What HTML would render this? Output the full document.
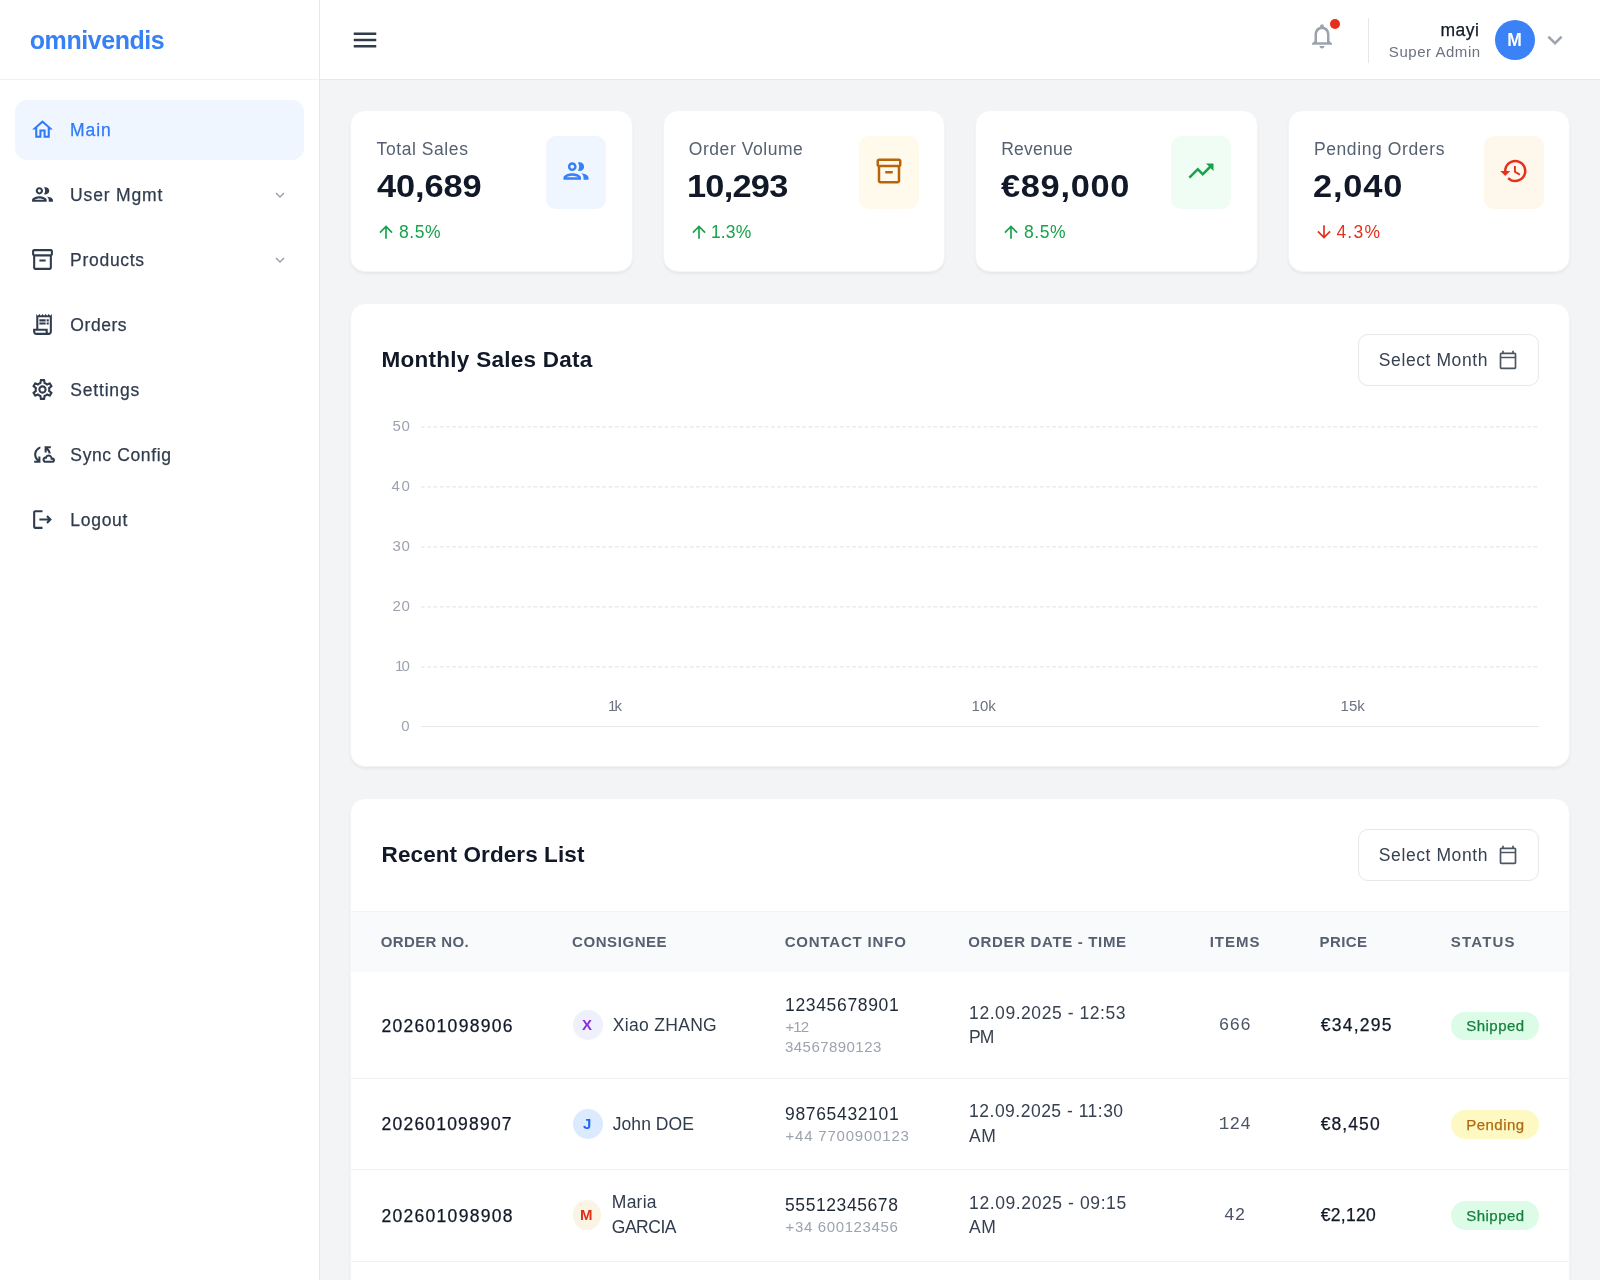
<!DOCTYPE html>
<html><head><meta charset="utf-8"><title>omnivendis</title>
<style>
html,body{margin:0;padding:0;}
body{width:1600px;height:1280px;overflow:hidden;background:#f3f4f6;position:relative;font-family:"Liberation Sans",sans-serif;}
.t{position:absolute;white-space:nowrap;}
.i{position:absolute;display:block;}
.b{position:absolute;}
#w{position:absolute;left:0;top:0;width:1600px;height:1280px;will-change:transform;}
</style></head><body>
<div id="w">
<div class="b" style="left:0px;top:0px;width:319px;height:1280px;background:#fff;border-right:1px solid #e5e7eb;"></div>
<div class="b" style="left:0px;top:79px;width:319px;height:1px;background:#f1f2f4;"></div>
<div class="t" style="left:29.80px;top:28px;font-size:25px;line-height:25px;color:#3780f6;letter-spacing:-0.449px;font-weight:700;">omnivendis</div>
<div class="b" style="left:15px;top:100px;width:289px;height:60px;background:#eff6ff;border-radius:12px;"></div>
<svg class="i" style="left:30px;top:116.9px;" width="25" height="25" viewBox="0 0 24 24" fill="#2f7af6"><path d="M12 5.69l5 4.5V18h-2v-6H9v6H7v-7.81l5-4.5M12 3L2 12h3v8h6v-6h2v6h6v-8h3L12 3z"/></svg>
<div class="t" style="left:70.10px;top:122px;font-size:17.5px;line-height:17.5px;color:#2f7af6;letter-spacing:0.923px;-webkit-text-stroke:0.25px #2f7af6;">Main</div>
<svg class="i" style="left:30px;top:181.9px;" width="25" height="25" viewBox="0 0 24 24" fill="#303c4d"><path d="M9 13.75c-2.34 0-7 1.17-7 3.5V19h14v-1.75c0-2.33-4.66-3.5-7-3.5zM4.34 17c.84-.58 2.87-1.25 4.66-1.25s3.82.67 4.66 1.25H4.34zM9 12c1.93 0 3.5-1.57 3.5-3.5S10.93 5 9 5 5.5 6.57 5.5 8.5 7.07 12 9 12zm0-5c.83 0 1.5.67 1.5 1.5S9.83 10 9 10s-1.5-.67-1.5-1.5S8.17 7 9 7zm7.04 6.81c1.16.84 1.96 1.96 1.96 3.44V19h4v-1.75c0-2.02-3.5-3.17-5.96-3.44zM15 12c1.93 0 3.5-1.57 3.5-3.5S16.93 5 15 5c-.54 0-1.04.13-1.5.35.63.89 1 1.98 1 3.15s-.37 2.26-1 3.15c.46.22.96.35 1.5.35z"/></svg>
<div class="t" style="left:70.10px;top:187px;font-size:17.5px;line-height:17.5px;color:#303c4d;letter-spacing:0.841px;-webkit-text-stroke:0.25px #303c4d;">User Mgmt</div>
<svg class="i" style="left:271px;top:185.5px;" width="18" height="18" viewBox="0 0 24 24" fill="#9ca3af"><path d="M16.59 8.59L12 13.17 7.41 8.59 6 10l6 6 6-6z"/></svg>
<svg class="i" style="left:30px;top:246.9px;" width="25" height="25" viewBox="0 0 24 24" fill="#303c4d"><path d="M20 2H4c-1 0-2 .9-2 2v3.01c0 .72.43 1.34 1 1.69V20c0 1.1 1.1 2 2 2h14c.9 0 2-.9 2-2V8.7c.57-.35 1-.97 1-1.69V4c0-1.1-1-2-2-2zm-1 18H5V9h14v11zm1-13H4V4h16v3zM9 12h6v2H9z"/></svg>
<div class="t" style="left:70.10px;top:252px;font-size:17.5px;line-height:17.5px;color:#303c4d;letter-spacing:0.710px;-webkit-text-stroke:0.25px #303c4d;">Products</div>
<svg class="i" style="left:271px;top:250.5px;" width="18" height="18" viewBox="0 0 24 24" fill="#9ca3af"><path d="M16.59 8.59L12 13.17 7.41 8.59 6 10l6 6 6-6z"/></svg>
<svg class="i" style="left:30px;top:311.9px;" width="25" height="25" viewBox="0 0 24 24" fill="#303c4d"><path d="M19.5 3.5L18 2l-1.5 1.5L15 2l-1.5 1.5L12 2l-1.5 1.5L9 2 7.5 3.5 6 2v14H3v3c0 1.66 1.34 3 3 3h12c1.66 0 3-1.34 3-3V2l-1.5 1.5zM15 20H6c-.55 0-1-.45-1-1v-1h10v2zm4-1c0 .55-.45 1-1 1s-1-.45-1-1v-3H8V5h11v14zM9 7h6v2H9zM16 7h2v2h-2zM9 10h6v2H9zM16 10h2v2h-2z"/></svg>
<div class="t" style="left:70.35px;top:317px;font-size:17.5px;line-height:17.5px;color:#303c4d;letter-spacing:0.558px;-webkit-text-stroke:0.25px #303c4d;">Orders</div>
<svg class="i" style="left:30px;top:376.9px;" width="25" height="25" viewBox="0 0 24 24" fill="#303c4d"><path d="M19.43 12.98c.04-.32.07-.64.07-.98 0-.34-.03-.66-.07-.98l2.11-1.65c.19-.15.24-.42.12-.64l-2-3.46c-.09-.16-.26-.25-.44-.25-.06 0-.12.01-.17.03l-2.49 1c-.52-.4-1.08-.73-1.69-.98l-.38-2.65C14.46 2.18 14.25 2 14 2h-4c-.25 0-.46.18-.49.42l-.38 2.65c-.61.25-1.17.59-1.69.98l-2.49-1c-.06-.02-.12-.03-.18-.03-.17 0-.34.09-.43.25l-2 3.46c-.13.22-.07.49.12.64l2.11 1.65c-.04.32-.07.65-.07.98 0 .33.03.66.07.98l-2.11 1.65c-.19.15-.24.42-.12.64l2 3.46c.09.16.26.25.44.25.06 0 .12-.01.17-.03l2.49-1c.52.4 1.08.73 1.69.98l.38 2.65c.03.24.24.42.49.42h4c.25 0 .46-.18.49-.42l.38-2.65c.61-.25 1.17-.59 1.69-.98l2.49 1c.06.02.12.03.18.03.17 0 .34-.09.43-.25l2-3.46c.12-.22.07-.49-.12-.64l-2.11-1.65zm-1.98-1.71c.04.31.05.52.05.73 0 .21-.02.43-.05.73l-.14 1.13.89.7 1.08.84-.7 1.21-1.27-.51-1.04-.42-.9.68c-.43.32-.84.56-1.25.73l-1.06.43-.16 1.13-.2 1.35h-1.4l-.19-1.35-.16-1.13-1.06-.43c-.43-.18-.83-.41-1.23-.71l-.91-.7-1.06.43-1.27.51-.7-1.21 1.08-.84.89-.7-.14-1.13c-.03-.31-.05-.54-.05-.74s.02-.43.05-.73l.14-1.13-.89-.7-1.08-.84.7-1.21 1.27.51 1.04.42.9-.68c.43-.32.84-.56 1.25-.73l1.06-.43.16-1.13.2-1.35h1.39l.19 1.35.16 1.13 1.06.43c.43.18.83.41 1.23.71l.91.7 1.06-.43 1.27-.51.7 1.21-1.07.85-.89.7.14 1.13zM12 8c-2.21 0-4 1.79-4 4s1.79 4 4 4 4-1.79 4-4-1.79-4-4-4zm0 6c-1.1 0-2-.9-2-2s.9-2 2-2 2 .9 2 2-.9 2-2 2z"/></svg>
<div class="t" style="left:70.35px;top:382px;font-size:17.5px;line-height:17.5px;color:#303c4d;letter-spacing:0.797px;-webkit-text-stroke:0.25px #303c4d;">Settings</div>
<svg class="i" style="left:30px;top:441.9px;" width="25" height="25" viewBox="0 0 24 24" fill="#303c4d"><path d="M21.5 14.98c-.02 0-.03 0-.05.01C21.2 13.3 19.76 12 18 12c-1.4 0-2.6.83-3.16 2.02C13.26 14.1 12 15.4 12 17c0 1.66 1.34 3 3 3l6.5-.02c1.38 0 2.5-1.12 2.5-2.5s-1.12-2.5-2.5-2.5zm.01 3L15 18c-.55 0-1-.45-1-1s.45-1 1-1h1.25v-.25c0-.97.78-1.75 1.75-1.75s1.75.78 1.75 1.75V17h1.76c.28 0 .5.22.5.49 0 .28-.22.49-.5.49zM10 4.26v2.09C7.67 7.18 6 9.39 6 12c0 1.77.78 3.34 2 4.44V14h2v6H4v-2h2.73C5.06 16.54 4 14.4 4 12c0-3.73 2.55-6.85 6-7.74zM20 6h-2.73c1.43 1.26 2.41 3.01 2.66 5h-2.02c-.23-1.36-.93-2.55-1.91-3.44V10h-2V4h6v2z"/></svg>
<div class="t" style="left:70.35px;top:447px;font-size:17.5px;line-height:17.5px;color:#303c4d;letter-spacing:0.618px;-webkit-text-stroke:0.25px #303c4d;">Sync Config</div>
<svg class="i" style="left:30px;top:506.9px;" width="25" height="25" viewBox="0 0 24 24" fill="#303c4d"><path d="M17 8l-1.41 1.41L17.17 11H9v2h8.17l-1.58 1.58L17 16l4-4-4-4zM5 5h7V3H5c-1.1 0-2 .9-2 2v14c0 1.1.9 2 2 2h7v-2H5V5z"/></svg>
<div class="t" style="left:70.35px;top:512px;font-size:17.5px;line-height:17.5px;color:#303c4d;letter-spacing:0.699px;-webkit-text-stroke:0.25px #303c4d;">Logout</div>
<div class="b" style="left:320px;top:0px;width:1280px;height:79px;background:#fff;"></div>
<div class="b" style="left:320px;top:79px;width:1280px;height:1px;background:#e5e7eb;"></div>
<svg class="i" style="left:350px;top:25px;" width="30" height="30" viewBox="0 0 24 24" fill="#303c4d"><path d="M3 18h18v-2H3v2zm0-5h18v-2H3v2zm0-7v2h18V6H3z"/></svg>
<svg class="i" style="left:1307.3px;top:21.2px;" width="30" height="30" viewBox="0 0 24 24" fill="#9ca3af"><path d="M12 22c1.1 0 2-.9 2-2h-4c0 1.1.9 2 2 2zm6-6v-5c0-3.07-1.63-5.64-4.5-6.32V4c0-.83-.67-1.5-1.5-1.5s-1.5.67-1.5 1.5v.68C7.64 5.36 6 7.92 6 11v5l-2 2v1h16v-1l-2-2zm-2 1H8v-6c0-2.48 1.51-4.5 4-4.5s4 2.02 4 4.5v6z"/></svg>
<div class="b" style="left:1330px;top:18.65px;width:10px;height:10px;background:#e62e1b;border-radius:50%;"></div>
<div class="b" style="left:1367.5px;top:17.5px;width:1px;height:45px;background:#e5e7eb;"></div>
<div class="t" style="left:1440.50px;top:22px;font-size:17.5px;line-height:17.5px;color:#111827;letter-spacing:0.494px;-webkit-text-stroke:0.25px #111827;">mayi</div>
<div class="t" style="left:1388.85px;top:44px;font-size:15px;line-height:15px;color:#6b7280;letter-spacing:0.537px;">Super Admin</div>
<div class="b" style="left:1495px;top:20px;width:40px;height:40px;background:#3b82f6;border-radius:50%;"></div>
<div class="t" style="left:1507.30px;top:32px;font-size:17.5px;line-height:17.5px;color:#fff;letter-spacing:0.000px;font-weight:700;">M</div>
<svg class="i" style="left:1540px;top:25px;" width="30" height="30" viewBox="0 0 24 24" fill="#9ca3af"><path d="M16.59 8.59L12 13.17 7.41 8.59 6 10l6 6 6-6z"/></svg>
<div class="b" style="left:350.0px;top:110px;width:282.5px;height:161.5px;background:#fff;border:1.25px solid #f3f4f6;border-radius:15px;box-shadow:0 2px 2.5px rgba(0,0,0,.05);box-sizing:border-box;"></div>
<div class="t" style="left:376.60px;top:141px;font-size:17.5px;line-height:17.5px;color:#556070;letter-spacing:0.568px;">Total Sales</div>
<div class="t" style="top:170.00px;font-size:32px;line-height:32px;color:#111827;font-weight:700;letter-spacing:-0.1px;left:376.5px;transform:scaleX(1.075);transform-origin:0 50%;">40,689</div>
<svg class="i" style="left:376.25px;top:221.5px;" width="20" height="20" viewBox="0 0 24 24" fill="#16a34a"><path d="M4 12l1.41 1.41L11 7.83V20h2V7.83l5.58 5.59L20 12l-8-8-8 8z"/></svg>
<div class="t" style="left:399.10px;top:224px;font-size:17.5px;line-height:17.5px;color:#16a34a;letter-spacing:0.517px;">8.5%</div>
<div class="b" style="left:546.25px;top:136.25px;width:60px;height:72.5px;background:#eff6ff;border-radius:10px;"></div>
<svg class="i" style="left:561.25px;top:155.95px;" width="30" height="30" viewBox="0 0 24 24" fill="#3780f6"><path d="M9 13.75c-2.34 0-7 1.17-7 3.5V19h14v-1.75c0-2.33-4.66-3.5-7-3.5zM4.34 17c.84-.58 2.87-1.25 4.66-1.25s3.82.67 4.66 1.25H4.34zM9 12c1.93 0 3.5-1.57 3.5-3.5S10.93 5 9 5 5.5 6.57 5.5 8.5 7.07 12 9 12zm0-5c.83 0 1.5.67 1.5 1.5S9.83 10 9 10s-1.5-.67-1.5-1.5S8.17 7 9 7zm7.04 6.81c1.16.84 1.96 1.96 1.96 3.44V19h4v-1.75c0-2.02-3.5-3.17-5.96-3.44zM15 12c1.93 0 3.5-1.57 3.5-3.5S16.93 5 15 5c-.54 0-1.04.13-1.5.35.63.89 1 1.98 1 3.15s-.37 2.26-1 3.15c.46.22.96.35 1.5.35z"/></svg>
<div class="b" style="left:662.5px;top:110px;width:282.5px;height:161.5px;background:#fff;border:1.25px solid #f3f4f6;border-radius:15px;box-shadow:0 2px 2.5px rgba(0,0,0,.05);box-sizing:border-box;"></div>
<div class="t" style="left:688.80px;top:141px;font-size:17.5px;line-height:17.5px;color:#556070;letter-spacing:0.548px;">Order Volume</div>
<div class="t" style="top:170.00px;font-size:32px;line-height:32px;color:#111827;font-weight:700;letter-spacing:-0.73px;left:686.7px;transform:scaleX(1.075);transform-origin:0 50%;">10,293</div>
<svg class="i" style="left:688.75px;top:221.5px;" width="20" height="20" viewBox="0 0 24 24" fill="#16a34a"><path d="M4 12l1.41 1.41L11 7.83V20h2V7.83l5.58 5.59L20 12l-8-8-8 8z"/></svg>
<div class="t" style="left:711.00px;top:224px;font-size:17.5px;line-height:17.5px;color:#16a34a;letter-spacing:0.117px;">1.3%</div>
<div class="b" style="left:858.75px;top:136.25px;width:60px;height:72.5px;background:#fffaeb;border-radius:10px;"></div>
<svg class="i" style="left:873.75px;top:155.95px;" width="30" height="30" viewBox="0 0 24 24" fill="#b8650a"><path d="M20 2H4c-1 0-2 .9-2 2v3.01c0 .72.43 1.34 1 1.69V20c0 1.1 1.1 2 2 2h14c.9 0 2-.9 2-2V8.7c.57-.35 1-.97 1-1.69V4c0-1.1-1-2-2-2zm-1 18H5V9h14v11zm1-13H4V4h16v3zM9 12h6v2H9z"/></svg>
<div class="b" style="left:975.0px;top:110px;width:282.5px;height:161.5px;background:#fff;border:1.25px solid #f3f4f6;border-radius:15px;box-shadow:0 2px 2.5px rgba(0,0,0,.05);box-sizing:border-box;"></div>
<div class="t" style="left:1001.20px;top:141px;font-size:17.5px;line-height:17.5px;color:#556070;letter-spacing:0.259px;">Revenue</div>
<div class="t" style="top:170.00px;font-size:32px;line-height:32px;color:#111827;font-weight:700;letter-spacing:0.63px;left:1000.7px;transform:scaleX(1.075);transform-origin:0 50%;">€89,000</div>
<svg class="i" style="left:1001.25px;top:221.5px;" width="20" height="20" viewBox="0 0 24 24" fill="#16a34a"><path d="M4 12l1.41 1.41L11 7.83V20h2V7.83l5.58 5.59L20 12l-8-8-8 8z"/></svg>
<div class="t" style="left:1024.10px;top:224px;font-size:17.5px;line-height:17.5px;color:#16a34a;letter-spacing:0.517px;">8.5%</div>
<div class="b" style="left:1171.25px;top:136.25px;width:60px;height:72.5px;background:#f0fdf4;border-radius:10px;"></div>
<svg class="i" style="left:1186.25px;top:155.95px;" width="30" height="30" viewBox="0 0 24 24" fill="#16a34a"><path d="M16 6l2.29 2.29-4.88 4.88-4-4L2 16.59 3.41 18l6-6 4 4 6.3-6.29L22 12V6z"/></svg>
<div class="b" style="left:1287.5px;top:110px;width:282.5px;height:161.5px;background:#fff;border:1.25px solid #f3f4f6;border-radius:15px;box-shadow:0 2px 2.5px rgba(0,0,0,.05);box-sizing:border-box;"></div>
<div class="t" style="left:1313.90px;top:141px;font-size:17.5px;line-height:17.5px;color:#556070;letter-spacing:0.609px;">Pending Orders</div>
<div class="t" style="top:170.00px;font-size:32px;line-height:32px;color:#111827;font-weight:700;letter-spacing:0.77px;left:1313.0px;transform:scaleX(1.075);transform-origin:0 50%;">2,040</div>
<svg class="i" style="left:1313.75px;top:221.5px;" width="20" height="20" viewBox="0 0 24 24" fill="#e4301c"><path d="M20 12l-1.41-1.41L13 16.17V4h-2v12.17l-5.58-5.59L4 12l8 8 8-8z"/></svg>
<div class="t" style="left:1336.40px;top:224px;font-size:17.5px;line-height:17.5px;color:#e4301c;letter-spacing:1.250px;">4.3%</div>
<div class="b" style="left:1483.75px;top:136.25px;width:60px;height:72.5px;background:#fdf7ec;border-radius:10px;"></div>
<svg class="i" style="left:1498.75px;top:155.95px;" width="30" height="30" viewBox="0 0 24 24" fill="#e4301c"><path d="M13 3c-4.97 0-9 4.03-9 9H1l3.89 3.89.07.14L9 12H6c0-3.87 3.13-7 7-7s7 3.13 7 7-3.13 7-7 7c-1.93 0-3.68-.79-4.94-2.06l-1.42 1.42C8.27 19.99 10.51 21 13 21c4.97 0 9-4.03 9-9s-4.03-9-9-9zm-1 5v5l4.25 2.52.77-1.28-3.52-2.09V8z"/></svg>
<div class="b" style="left:350px;top:302.5px;width:1220px;height:464px;background:#fff;border:1.25px solid #f3f4f6;border-radius:15px;box-shadow:0 2px 2.5px rgba(0,0,0,.05);box-sizing:border-box;"></div>
<div class="t" style="left:381.60px;top:349px;font-size:22.5px;line-height:22.5px;color:#111827;letter-spacing:0.257px;font-weight:700;">Monthly Sales Data</div>
<div class="b" style="left:1357.5px;top:333.75px;width:181.25px;height:52.5px;background:#fff;border:1.25px solid #e5e7eb;border-radius:10px;box-sizing:border-box;"></div>
<div class="t" style="left:1378.85px;top:352px;font-size:17.5px;line-height:17.5px;color:#374151;letter-spacing:0.581px;">Select Month</div>
<svg class="i" style="left:1497.8px;top:349.75px;" width="20" height="20" viewBox="0 0 24 24" fill="#4b5563"><path d="M20 3h-1V1h-2v2H7V1H5v2H4c-1.1 0-2 .9-2 2v16c0 1.1.9 2 2 2h16c1.1 0 2-.9 2-2V5c0-1.1-.9-2-2-2zm0 18H4V10h16v11zm0-13H4V5h16v3z"/></svg>
<div class="t" style="left:392.60px;top:418px;font-size:15px;line-height:15px;color:#9ca3af;letter-spacing:0.462px;">50</div>
<svg class="i" style="left:421.25px;top:423.5px" width="1117.5" height="6"><line x1="0" y1="2.8" x2="1117.5" y2="2.8" stroke="#e5e7eb" stroke-width="1.25" stroke-dasharray="3.75 2.5"/></svg>
<div class="t" style="left:391.60px;top:478px;font-size:15px;line-height:15px;color:#9ca3af;letter-spacing:1.462px;">40</div>
<svg class="i" style="left:421.25px;top:483.5px" width="1117.5" height="6"><line x1="0" y1="2.8" x2="1117.5" y2="2.8" stroke="#e5e7eb" stroke-width="1.25" stroke-dasharray="3.75 2.5"/></svg>
<div class="t" style="left:392.60px;top:538px;font-size:15px;line-height:15px;color:#9ca3af;letter-spacing:0.462px;">30</div>
<svg class="i" style="left:421.25px;top:543.5px" width="1117.5" height="6"><line x1="0" y1="2.8" x2="1117.5" y2="2.8" stroke="#e5e7eb" stroke-width="1.25" stroke-dasharray="3.75 2.5"/></svg>
<div class="t" style="left:392.60px;top:598px;font-size:15px;line-height:15px;color:#9ca3af;letter-spacing:0.462px;">20</div>
<svg class="i" style="left:421.25px;top:603.5px" width="1117.5" height="6"><line x1="0" y1="2.8" x2="1117.5" y2="2.8" stroke="#e5e7eb" stroke-width="1.25" stroke-dasharray="3.75 2.5"/></svg>
<div class="t" style="left:395.00px;top:658px;font-size:15px;line-height:15px;color:#9ca3af;letter-spacing:-1.938px;">10</div>
<svg class="i" style="left:421.25px;top:663.5px" width="1117.5" height="6"><line x1="0" y1="2.8" x2="1117.5" y2="2.8" stroke="#e5e7eb" stroke-width="1.25" stroke-dasharray="3.75 2.5"/></svg>
<div class="t" style="left:401.20px;top:718px;font-size:15px;line-height:15px;color:#9ca3af;letter-spacing:0.000px;">0</div>
<div class="b" style="left:421.25px;top:725.9px;width:1117.5px;height:1.25px;background:#e5e7eb;"></div>
<div class="t" style="left:608.00px;top:698px;font-size:15px;line-height:15px;color:#6b7280;letter-spacing:-1.812px;">1k</div>
<div class="t" style="left:971.60px;top:698px;font-size:15px;line-height:15px;color:#6b7280;letter-spacing:0.037px;">10k</div>
<div class="t" style="left:1340.60px;top:698px;font-size:15px;line-height:15px;color:#6b7280;letter-spacing:0.037px;">15k</div>
<div class="b" style="left:350px;top:797.5px;width:1220px;height:520px;background:#fff;border:1.25px solid #f3f4f6;border-radius:15px;box-shadow:0 2px 2.5px rgba(0,0,0,.05);box-sizing:border-box;"></div>
<div class="t" style="left:381.60px;top:844px;font-size:22.5px;line-height:22.5px;color:#111827;letter-spacing:0.087px;font-weight:700;">Recent Orders List</div>
<div class="b" style="left:1357.5px;top:828.75px;width:181.25px;height:52.5px;background:#fff;border:1.25px solid #e5e7eb;border-radius:10px;box-sizing:border-box;"></div>
<div class="t" style="left:1378.85px;top:847px;font-size:17.5px;line-height:17.5px;color:#374151;letter-spacing:0.581px;">Select Month</div>
<svg class="i" style="left:1497.8px;top:844.75px;" width="20" height="20" viewBox="0 0 24 24" fill="#4b5563"><path d="M20 3h-1V1h-2v2H7V1H5v2H4c-1.1 0-2 .9-2 2v16c0 1.1.9 2 2 2h16c1.1 0 2-.9 2-2V5c0-1.1-.9-2-2-2zm0 18H4V10h16v11zm0-13H4V5h16v3z"/></svg>
<div class="b" style="left:351.25px;top:911.25px;width:1217.5px;height:61.2px;background:#f9fafb;border-top:1.25px solid #f1f3f5;box-sizing:border-box;"></div>
<div class="t" style="left:380.85px;top:934px;font-size:15px;line-height:15px;color:#566070;letter-spacing:0.342px;font-weight:700;">ORDER NO.</div>
<div class="t" style="left:572.10px;top:934px;font-size:15px;line-height:15px;color:#566070;letter-spacing:0.562px;font-weight:700;">CONSIGNEE</div>
<div class="t" style="left:784.70px;top:934px;font-size:15px;line-height:15px;color:#566070;letter-spacing:0.809px;font-weight:700;">CONTACT INFO</div>
<div class="t" style="left:968.20px;top:934px;font-size:15px;line-height:15px;color:#566070;letter-spacing:0.667px;font-weight:700;">ORDER DATE - TIME</div>
<div class="t" style="left:1209.70px;top:934px;font-size:15px;line-height:15px;color:#566070;letter-spacing:0.969px;font-weight:700;">ITEMS</div>
<div class="t" style="left:1319.60px;top:934px;font-size:15px;line-height:15px;color:#566070;letter-spacing:0.394px;font-weight:700;">PRICE</div>
<div class="t" style="left:1450.80px;top:934px;font-size:15px;line-height:15px;color:#566070;letter-spacing:1.193px;font-weight:700;">STATUS</div>
<div class="b" style="left:351.25px;top:1078px;width:1217.5px;height:1px;background:#f1f2f4;"></div>
<div class="t" style="left:381.60px;top:1018px;font-size:17.5px;line-height:17.5px;color:#111827;letter-spacing:1.272px;-webkit-text-stroke:0.25px #111827;">202601098906</div>
<div class="b" style="left:572.6px;top:1010.0px;width:30px;height:30px;background:#eef0fc;border-radius:50%;"></div>
<div class="t" style="left:581.90px;top:1017px;font-size:15px;line-height:15px;color:#8b2be2;letter-spacing:0.000px;font-weight:700;">X</div>
<div class="t" style="left:612.80px;top:1017px;font-size:17.5px;line-height:17.5px;color:#303b4c;letter-spacing:0.306px;">Xiao ZHANG</div>
<div class="t" style="left:785.00px;top:997px;font-size:17.5px;line-height:17.5px;color:#1f2937;letter-spacing:0.664px;">12345678901</div>
<div class="t" style="left:785.50px;top:1019px;font-size:15px;line-height:15px;color:#9ca3af;letter-spacing:-0.931px;">+12</div>
<div class="t" style="left:785.00px;top:1039px;font-size:15px;line-height:15px;color:#9ca3af;letter-spacing:0.454px;">34567890123</div>
<div class="t" style="left:969.10px;top:1005px;font-size:17.5px;line-height:17.5px;color:#374151;letter-spacing:0.556px;">12.09.2025 - 12:53</div>
<div class="t" style="left:969.10px;top:1029px;font-size:17.5px;line-height:17.5px;color:#374151;letter-spacing:-1.100px;">PM</div>
<div class="t" style="left:1218.85px;top:1017px;font-size:17.5px;line-height:17.5px;color:#4b5563;letter-spacing:0.150px;font-family:'Liberation Mono',monospace;">666</div>
<div class="t" style="left:1320.70px;top:1017px;font-size:17.5px;line-height:17.5px;color:#111827;letter-spacing:1.273px;-webkit-text-stroke:0.25px #111827;">€34,295</div>
<div class="b" style="left:1451.3px;top:1011.5px;width:87.4px;height:28.5px;background:#dcfce7;border-radius:15px;"></div>
<div class="t" style="left:1466.30px;top:1018px;font-size:15px;line-height:15px;color:#15803d;letter-spacing:0.458px;-webkit-text-stroke:0.25px #15803d;">Shipped</div>
<div class="b" style="left:351.25px;top:1169px;width:1217.5px;height:1px;background:#f1f2f4;"></div>
<div class="t" style="left:381.60px;top:1116px;font-size:17.5px;line-height:17.5px;color:#111827;letter-spacing:1.199px;-webkit-text-stroke:0.25px #111827;">202601098907</div>
<div class="b" style="left:572.6px;top:1108.6499999999999px;width:30px;height:30px;background:#dbeafe;border-radius:50%;"></div>
<div class="t" style="left:583.00px;top:1116px;font-size:15px;line-height:15px;color:#2468ee;letter-spacing:0.000px;font-weight:700;">J</div>
<div class="t" style="left:612.80px;top:1116px;font-size:17.5px;line-height:17.5px;color:#303b4c;letter-spacing:0.040px;">John DOE</div>
<div class="t" style="left:785.00px;top:1106px;font-size:17.5px;line-height:17.5px;color:#1f2937;letter-spacing:0.664px;">98765432101</div>
<div class="t" style="left:785.50px;top:1128px;font-size:15px;line-height:15px;color:#9ca3af;letter-spacing:0.798px;">+44 7700900123</div>
<div class="t" style="left:969.10px;top:1103px;font-size:17.5px;line-height:17.5px;color:#374151;letter-spacing:0.492px;">12.09.2025 - 11:30</div>
<div class="t" style="left:969.10px;top:1128px;font-size:17.5px;line-height:17.5px;color:#374151;letter-spacing:0.500px;">AM</div>
<div class="t" style="left:1218.85px;top:1116px;font-size:17.5px;line-height:17.5px;color:#4b5563;letter-spacing:0.150px;font-family:'Liberation Mono',monospace;">124</div>
<div class="t" style="left:1320.70px;top:1116px;font-size:17.5px;line-height:17.5px;color:#111827;letter-spacing:1.089px;-webkit-text-stroke:0.25px #111827;">€8,450</div>
<div class="b" style="left:1451.3px;top:1110.1499999999999px;width:87.4px;height:28.5px;background:#fef9c3;border-radius:15px;"></div>
<div class="t" style="left:1466.30px;top:1117px;font-size:15px;line-height:15px;color:#b06a10;letter-spacing:0.458px;-webkit-text-stroke:0.25px #b06a10;">Pending</div>
<div class="b" style="left:351.25px;top:1261px;width:1217.5px;height:1px;background:#f1f2f4;"></div>
<div class="t" style="left:381.60px;top:1208px;font-size:17.5px;line-height:17.5px;color:#111827;letter-spacing:1.272px;-webkit-text-stroke:0.25px #111827;">202601098908</div>
<div class="b" style="left:572.6px;top:1199.95px;width:28.6px;height:30px;background:#fbf3e4;border-radius:50%;"></div>
<div class="t" style="left:580.00px;top:1207px;font-size:15px;line-height:15px;color:#e0301a;letter-spacing:0.000px;font-weight:700;">M</div>
<div class="t" style="left:611.80px;top:1194px;font-size:17.5px;line-height:17.5px;color:#303b4c;letter-spacing:0.252px;">Maria</div>
<div class="t" style="left:611.80px;top:1219px;font-size:17.5px;line-height:17.5px;color:#303b4c;letter-spacing:-0.493px;">GARCIA</div>
<div class="t" style="left:785.00px;top:1197px;font-size:17.5px;line-height:17.5px;color:#1f2937;letter-spacing:0.584px;">55512345678</div>
<div class="t" style="left:785.50px;top:1219px;font-size:15px;line-height:15px;color:#9ca3af;letter-spacing:0.642px;">+34 600123456</div>
<div class="t" style="left:969.10px;top:1195px;font-size:17.5px;line-height:17.5px;color:#374151;letter-spacing:0.597px;">12.09.2025 - 09:15</div>
<div class="t" style="left:969.10px;top:1219px;font-size:17.5px;line-height:17.5px;color:#374151;letter-spacing:0.500px;">AM</div>
<div class="t" style="left:1224.10px;top:1207px;font-size:17.5px;line-height:17.5px;color:#4b5563;letter-spacing:0.150px;font-family:'Liberation Mono',monospace;">42</div>
<div class="t" style="left:1320.70px;top:1207px;font-size:17.5px;line-height:17.5px;color:#111827;letter-spacing:0.289px;-webkit-text-stroke:0.25px #111827;">€2,120</div>
<div class="b" style="left:1451.3px;top:1201.45px;width:87.4px;height:28.5px;background:#dcfce7;border-radius:15px;"></div>
<div class="t" style="left:1466.30px;top:1208px;font-size:15px;line-height:15px;color:#15803d;letter-spacing:0.458px;-webkit-text-stroke:0.25px #15803d;">Shipped</div>
</div>
</body></html>
